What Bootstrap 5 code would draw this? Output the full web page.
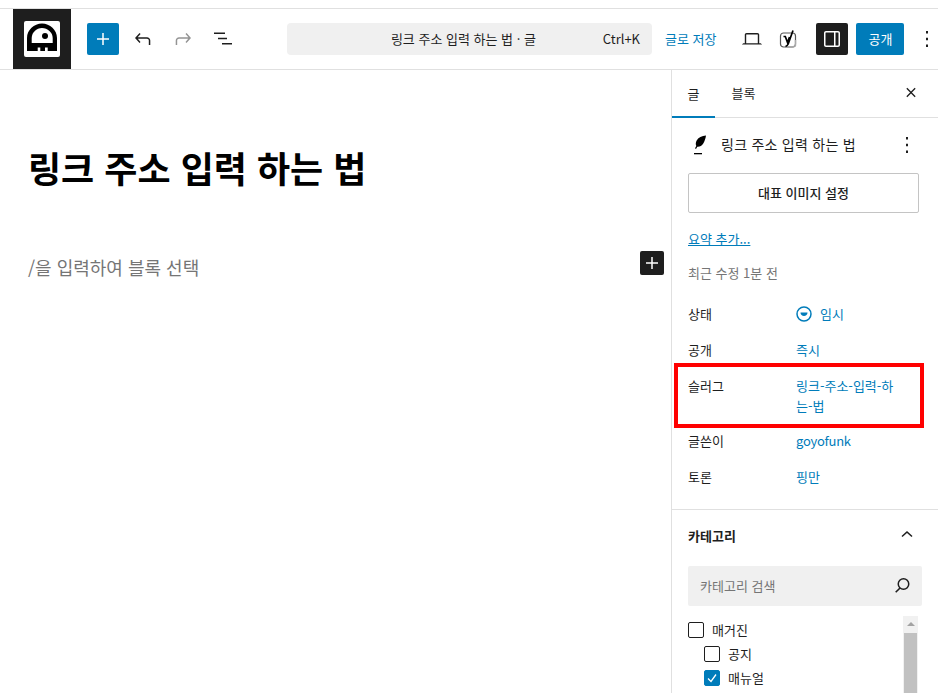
<!DOCTYPE html>
<html lang="ko">
<head>
<meta charset="utf-8">
<title>링크 주소 입력 하는 법</title>
<link href="https://cdn.jsdelivr.net/npm/bootstrap@5.3.0/dist/css/bootstrap.min.css" rel="stylesheet">
<style>
html,body{height:693px;overflow:hidden;background:#fff;}
body{font-family:"Noto Sans CJK KR","Liberation Sans",sans-serif;font-size:13px;color:#1e1e1e;padding-top:8px;}
a{color:#007cba;}
.top-wrap{height:62px;border-top:1px solid #e0e0e0;border-bottom:1px solid #e0e0e0;padding-left:13px;}
.logo-box{width:58px;height:60px;background:#1e1e1e;flex:none;}
.tb-btn{width:32px;height:32px;border:0;border-radius:2px;padding:0;background:transparent;flex:none;color:#1e1e1e;}
.tb-primary{background:#007cba;color:#fff;}
.tb-dark{background:#1e1e1e;color:#fff;margin-left:12px;}
.tb-laptop{margin-left:20px;}
.tb-yoast{margin-left:4px;}
.tb-more{margin-left:11px;width:24px;}
.cmd-bar{width:365px;height:32px;background:#f0f0f0;border-radius:4px;margin-left:48px;position:relative;font-size:13px;flex:none;}
.cmd-title{flex:1;text-align:center;padding-left:37px;}
.cmd-key{padding-right:12px;color:#1e1e1e;}
.save-link{font-size:13px;margin-left:13px;white-space:nowrap;width:52px;}
.pub-btn{width:48px;height:32px;background:#007cba;color:#fff;border:0;border-radius:2px;font-size:13px;padding:0;flex:none;}
.edit-main{flex:1;min-width:0;padding-left:28px;}
.post-title{font-size:36px;font-weight:700;color:#000;line-height:1.4;margin:0;padding-top:72px;letter-spacing:0;}
.holder{font-size:18px;color:#757575;margin-top:61px;line-height:28px;}
.add-square{width:24px;height:24px;background:#1e1e1e;color:#fff;border:0;border-radius:2px;padding:0;position:absolute;left:640px;top:181px;display:flex;align-items:center;justify-content:center;}
.side{width:267px;flex:none;border-left:1px solid #e0e0e0;height:623px;overflow:hidden;}
.tabs{height:48px;border-bottom:1px solid #e0e0e0;padding-right:15px;}
.tab-on{width:43px;height:47px;box-shadow:inset 0 -2px 0 #007cba;line-height:45px;text-align:center;margin-bottom:-1px;}
.tab-off{width:57px;height:47px;line-height:45px;text-align:center;}
.panel-a{padding:0 16px;border-bottom:1px solid #e0e0e0;height:392px;position:relative;}
.post-head{height:54px;}
.feather{width:24px;height:24px;flex:none;}
.post-name{font-size:14px;letter-spacing:.25px;margin-left:9px;margin-bottom:2px;}
.head-more{margin-left:auto;margin-right:3px;}
.img-btn{display:block;width:231px;height:40px;border:1px solid #c4c4c4;border-radius:2px;background:#fff;font-size:13px;color:#1e1e1e;padding:0;margin-top:1px;font-weight:500;}
.excerpt{display:block;margin-top:16px;line-height:20px;}
.recent{color:#757575;margin-top:14px;line-height:20px;}
.meta-row{display:flex;margin-top:16px;}
.meta-first{margin-top:21px;}
.meta-tight{margin-top:15px;}
.meta-label{width:108px;flex:none;}
.meta-val{flex:1;color:#007cba;line-height:20px;}
.latin-name{letter-spacing:-.25px;}
.red-mark{position:absolute;left:2px;top:245px;width:250px;height:65px;border:4px solid #f00;pointer-events:none;}
.panel-b{padding:0 16px;position:relative;}
.cat-head{height:50px;font-weight:700;padding-top:2px;}
.cat-chevron{margin-right:3px;}
.cat-search{height:40px;background:#f0f0f0;border-radius:2px;padding:0 10px 0 12px;color:#757575;margin-top:6px;}
.tree{margin-top:12px;position:relative;}
.tree-row{height:24px;display:flex;align-items:center;gap:8px;}
.tree-sub{padding-left:16px;}
.cbx{width:16px;height:16px;border:1px solid #1e1e1e;border-radius:2px;flex:none;background:#fff;display:flex;align-items:center;justify-content:center;}
.cbx-on{background:#007cba;border-color:#007cba;}
.sbar{position:absolute;left:215px;top:-2px;width:15px;height:90px;background:#f1f1f1;}
.sbar-thumb{position:absolute;left:1px;right:1px;top:17px;bottom:0;background:#c1c1c1;}
.sbar-arrow{position:absolute;left:4px;top:6px;width:0;height:0;border-left:4px solid transparent;border-right:4px solid transparent;border-bottom:4px solid #a3a3a3;}
</style>
</head>
<body>
<div class="top-wrap d-flex align-items-center">
  <div class="logo-box d-flex align-items-center justify-content-center">
    <svg width="36" height="36" viewBox="0 0 36 36"><rect width="36" height="36" rx="2" fill="#fff"/><path d="M3 30V17C3 9 10 2.500 18 2.500S33 9 33 17V30H23.700V26.500H21V30H16.300V26.500H13.700V30Z" fill="#000"/><path d="M7.700 22V17C7.700 11.500 12.500 7 18 7S28.700 11.500 28.700 17V22Z" fill="#fff"/><circle cx="21" cy="15" r="3" fill="#000"/></svg>
  </div>
  <button class="tb-btn tb-primary d-flex align-items-center justify-content-center ms-3" aria-label="추가"><svg width="24" height="24" viewBox="0 0 24 24"><path d="M11.250 6h1.500v5.250H18v1.500h-5.250V18h-1.500v-5.250H6v-1.500h5.250z" fill="currentColor"/></svg></button>
  <button class="tb-btn d-flex align-items-center justify-content-center ms-2" aria-label="실행 취소"><svg width="24" height="24" viewBox="0 0 24 24"><path d="M18.300 11.700c-.6-.6-1.400-.9-2.300-.9H6.700l2.900-3.300-1.100-1-4.500 5L8.500 16.500l1-1-2.700-3.200H16c.5 0 .9.200 1.300.5.400.3.500.8.500 1.300v4.400h1.500v-4.400c0-1-.4-1.800-1-2.400z" fill="#1e1e1e" transform="translate(0 -.5)"/></svg></button>
  <button class="tb-btn d-flex align-items-center justify-content-center ms-2" aria-label="다시 실행"><svg width="24" height="24" viewBox="0 0 24 24"><path d="M15.600 6.500l-1.100 1 2.900 3.300H8c-.9 0-1.700.3-2.300.9-.6.6-1 1.400-1 2.400v4.400h1.500v-4.400c0-.5.200-1 .5-1.300.4-.3.800-.5 1.300-.5h9.200L14.500 15.500l1 1 4.500-5z" fill="#949494" transform="translate(0 -.5)"/></svg></button>
  <button class="tb-btn d-flex align-items-center justify-content-center ms-2" aria-label="목록"><svg width="24" height="24" viewBox="0 0 24 24"><path d="M3 6h11v1.500H3zM7 11.250h9v1.500H7zM11 16.500h10V18H11z" fill="#1e1e1e" transform="translate(0 -.5)"/></svg></button>
  <div class="cmd-bar d-flex align-items-center"><span class="cmd-title">링크 주소 입력 하는 법 · 글</span><span class="cmd-key">Ctrl+K</span></div>
  <a class="save-link text-decoration-none" href="#">글로 저장</a>
  <button class="tb-btn tb-laptop d-flex align-items-center justify-content-center" aria-label="보기"><svg width="24" height="24" viewBox="0 0 24 24"><path d="M20 16.200h-.8V7.800c0-1-.8-1.800-1.800-1.800H6.600c-1 0-1.800.8-1.800 1.800v8.400H4c-.9 0-1.700.6-2 1.300h20c-.3-.7-1.100-1.300-2-1.300zM6.200 7.800c0-.2.200-.4.400-.4h10.800c.2 0 .4.200.4.400v8.400H6.200V7.800z" fill="#1e1e1e"/></svg></button>
  <button class="tb-btn tb-yoast d-flex align-items-center justify-content-center" aria-label="Yoast"><svg width="20" height="22" viewBox="0 0 20 22"><rect x="2.500" y="5" width="15" height="14" rx="3" fill="none" stroke="#555" stroke-width="1.200"/><path d="M12.500 18.900H15.500l2-1.500V12" fill="none" stroke="#aaa" stroke-width="1.400"/><path d="M5.500 8.500h1.800l2.200 6 2-5.500M15 2.500l-4.800 13.500c-.5 1.200-1.200 2-2.700 2.500" fill="none" stroke="#000" stroke-width="1.700"/></svg></button>
  <button class="tb-btn tb-dark d-flex align-items-center justify-content-center" aria-label="설정"><svg width="24" height="24" viewBox="0 0 24 24"><path d="M18 4H6c-1.100 0-2 .9-2 2v12c0 1.100.9 2 2 2h12c1.100 0 2-.9 2-2V6c0-1.100-.9-2-2-2zM5.500 18V6c0-.3.200-.5.500-.5h8v13H6c-.3 0-.5-.2-.5-.5zm13 0c0 .3-.2.500-.5.500h-2.500v-13H18c.3 0 .5.200.5.500z" fill="#fff"/></svg></button>
  <button class="pub-btn ms-2">공개</button>
  <button class="tb-btn tb-more d-flex align-items-center justify-content-center" aria-label="옵션"><svg width="24" height="24" viewBox="0 0 24 24"><path d="M11 4h2v2.500h-2zM11 10.750h2v2.500h-2zM11 17.500h2V20h-2z" fill="#1e1e1e"/></svg></button>
</div>

<div class="d-flex position-relative">
  <div class="edit-main">
    <h1 class="post-title">링크 주소 입력 하는 법</h1>
    <div class="holder">/을 입력하여 블록 선택</div>
    <button class="add-square" aria-label="블록 추가"><svg width="24" height="24" viewBox="0 0 24 24"><path d="M11.250 6h1.500v5.250H18v1.500h-5.250V18h-1.500v-5.250H6v-1.500h5.250z" fill="#fff"/></svg></button>
  </div>
  <aside class="side">
    <div class="tabs d-flex align-items-center">
      <div class="tab-on">글</div>
      <div class="tab-off">블록</div>
      <svg class="ms-auto" width="24" height="24" viewBox="0 0 24 24"><path d="M12 13.060l4.240 4.240 1.060-1.060L13.060 12l4.240-4.240-1.060-1.060L12 10.940 7.760 6.700 6.700 7.760 10.940 12 6.700 16.240l1.060 1.060z" fill="#1e1e1e" transform="translate(1.500 10.500) scale(.875) translate(0 -12)"/></svg>
    </div>
    <div class="panel-a">
      <div class="post-head d-flex align-items-center">
        <svg class="feather" viewBox="0 0 24 24"><path d="M18 2.500c-4 .3-7.800 1.900-9.500 5.200-.9 1.800-.9 3.800-.2 5.300L7 15.300l1 .6 1.300-2.100c2.500.2 4.500-1 5.800-3 1.500-2.300 2.500-5.400 2.900-8.300z" fill="#000"/><path d="M6 20h8v1.300H6z" fill="#000"/></svg>
        <span class="post-name">링크 주소 입력 하는 법</span>
        <svg class="head-more" width="24" height="24" viewBox="0 0 24 24"><path d="M11 4h2v2.500h-2zM11 10.750h2v2.500h-2zM11 17.500h2V20h-2z" fill="#1e1e1e"/></svg>
      </div>
      <button class="img-btn">대표 이미지 설정</button>
      <a class="excerpt" href="#">요약 추가...</a>
      <div class="recent">최근 수정 1분 전</div>
      <div class="meta-row meta-first"><div class="meta-label">상태</div><div class="meta-val d-flex align-items-center gap-2"><svg width="16" height="16" viewBox="0 0 16 16"><circle cx="8" cy="8" r="7" fill="none" stroke="#007cba" stroke-width="1.500"/><path d="M4.500 6.500h7C11.500 8.500 10 10 8 10S4.500 8.500 4.500 6.500z" fill="#007cba"/></svg>임시</div></div>
      <div class="meta-row"><div class="meta-label">공개</div><div class="meta-val">즉시</div></div>
      <div class="meta-row"><div class="meta-label">슬러그</div><div class="meta-val">링크-주소-입력-하<br>는-법</div></div>
      <div class="meta-row meta-tight"><div class="meta-label">글쓴이</div><div class="meta-val latin-name">goyofunk</div></div>
      <div class="meta-row"><div class="meta-label">토론</div><div class="meta-val">핑만</div></div>
      <div class="red-mark"></div>
    </div>
    <div class="panel-b">
      <div class="cat-head d-flex align-items-center justify-content-between">카테고리<svg class="cat-chevron" width="24" height="24" viewBox="0 0 24 24"><path d="M6.500 12L12 7l5.500 5-1 1.100L12 9.100l-4.500 4z" fill="#1e1e1e"/></svg></div>
      <div class="cat-search d-flex align-items-center justify-content-between">카테고리 검색<svg width="18" height="18" viewBox="0 0 18 18"><circle cx="9.500" cy="7" r="5.250" fill="none" stroke="#1e1e1e" stroke-width="1.500"/><path d="M6 11L1.700 15.300" stroke="#1e1e1e" stroke-width="1.600"/></svg></div>
      <div class="tree">
        <div class="tree-row">
          <span class="cbx"></span>매거진
        </div>
        <div class="tree-row tree-sub"><span class="cbx"></span>공지</div>
        <div class="tree-row tree-sub"><span class="cbx cbx-on"><svg width="12" height="12" viewBox="0 0 12 12"><path d="M2 6.500l3 3 5-7" fill="none" stroke="#fff" stroke-width="1.300"/></svg></span>매뉴얼</div>
        <div class="sbar"><span class="sbar-arrow"></span><span class="sbar-thumb"></span></div>
      </div>
    </div>
  </aside>
</div>
</body>
</html>
